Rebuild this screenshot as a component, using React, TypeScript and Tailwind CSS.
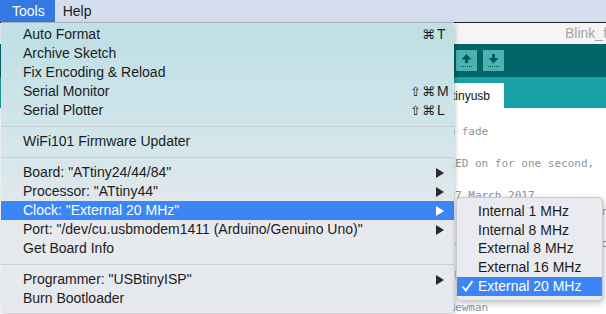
import React from "react";

type Item =
  | { kind: "sep" }
  | { kind: "item"; label: string; mods?: string; keyName?: string; sub?: boolean; active?: boolean };

const menuItems: Item[] = [
  { kind: "item", label: "Auto Format", mods: "⌘", keyName: "T" },
  { kind: "item", label: "Archive Sketch" },
  { kind: "item", label: "Fix Encoding & Reload" },
  { kind: "item", label: "Serial Monitor", mods: "⇧⌘", keyName: "M" },
  { kind: "item", label: "Serial Plotter", mods: "⇧⌘", keyName: "L" },
  { kind: "sep" },
  { kind: "item", label: "WiFi101 Firmware Updater" },
  { kind: "sep" },
  { kind: "item", label: 'Board: "ATtiny24/44/84"', sub: true },
  { kind: "item", label: 'Processor: "ATtiny44"', sub: true },
  { kind: "item", label: 'Clock: "External 20 MHz"', sub: true, active: true },
  { kind: "item", label: 'Port: "/dev/cu.usbmodem1411 (Arduino/Genuino Uno)"', sub: true },
  { kind: "item", label: "Get Board Info" },
  { kind: "sep" },
  { kind: "item", label: 'Programmer: "USBtinyISP"', sub: true },
  { kind: "item", label: "Burn Bootloader" },
];

const clockOptions = ["Internal 1 MHz", "Internal 8 MHz", "External 8 MHz", "External 16 MHz", "External 20 MHz"];

// editor lines sit mostly under the menu, only the tail end shows
const codeLines = [
  "/*",
  "  Blink and a fade",
  "",
  "  Turns the LED on for one second,",
  "",
  "  rewritten 27 March 2017",
  "  for the ATtiny44 on the hello board",
  "",
  "  This example code is in the public domain.",
  "",
  "  modified 8 May 2014",
  "",
  "  by Andrew Newman",
];

function Arrow({ white }: { white?: boolean }) {
  return (
    <svg width="14" height="10" viewBox="0 0 14 10" className="block">
      <polygon points="0,0 8,5 0,10" fill={white ? "#ffffff" : "#2a2a2a"} />
    </svg>
  );
}

function ToolButton({ dir }: { dir: "up" | "down" | "none" }) {
  return (
    <div className="w-[21px] h-[21px] bg-[#4cb3b1]">
      <svg width="21" height="21" viewBox="0 0 21 21" className="block">
        {dir === "up" && <polygon points="10.5,4 15.5,9.5 12,9.5 12,13 9,13 9,9.5 5.5,9.5" fill="#00585c" />}
        {dir === "down" && <polygon points="9,4 12,4 12,8 15.5,8 10.5,13.5 5.5,8 9,8" fill="#00585c" />}
        {dir !== "none" &&
          [5, 7, 9, 11, 13, 15].map((x) => <rect key={x} x={x} y={16} width={1} height={1} fill="#00585c" />)}
      </svg>
    </div>
  );
}

export default function App() {
  return (
    <div className="relative w-[606px] h-[314px] overflow-hidden bg-white font-['Liberation_Sans',Arial,sans-serif]">
      {/* menu bar */}
      <div className="flex h-[22px] items-center bg-[#d4deef] text-[14px] text-[#1a1a1a]">
        <div className="flex h-full items-center bg-[#3478e4] pl-3 pr-[10px] text-white">Tools</div>
        <div className="pl-[8px]">Help</div>
      </div>

      {/* Arduino window behind the menu */}
      <div className="flex flex-col h-[292px] border-t border-[#1e1e1e]">
        <div className="flex h-[21px] shrink-0 items-center bg-[#f5f5f5] pl-[565px] whitespace-nowrap text-[14px] text-[#a6a6a6]">
          Blink_fade_attinyusb | Arduino 1.8.2
        </div>
        <div className="flex h-[33px] shrink-0 items-center gap-[6px] bg-[#006468] pl-[375px]">
          <ToolButton dir="none" />
          <ToolButton dir="none" />
          <ToolButton dir="none" />
          <ToolButton dir="up" />
          <ToolButton dir="down" />
        </div>
        <div className="flex h-[31px] shrink-0 items-end bg-[#17a1a5] pl-[380px]">
          <div className="flex h-[25px] w-[124px] items-center justify-end bg-white pr-[14px] text-[12px] text-[#111]">
            Blink_attinyusb
          </div>
        </div>
        <div className="min-h-0 flex-1 overflow-hidden pl-[369px] font-['DejaVu_Sans_Mono',monospace] text-[11px] leading-[16px] text-[#8d9494]">
          {codeLines.map((line, i) => (
            <div key={i} className="h-4 whitespace-pre">
              {line}
            </div>
          ))}
        </div>
      </div>

      {/* Tools menu */}
      <div className="absolute left-px top-[22px] w-[453px] rounded-b-[5px] border-t border-[#a8b5be] bg-linear-to-b from-[#c0e0e6] from-5% via-[#d2e6ea] via-40% to-[#e6e9ee] to-70% pt-[2px] pb-[5px] text-[14px] text-[#1c1c1c] shadow-[1px_2px_5px_rgba(0,0,0,0.25)]">
        {menuItems.map((it, i) =>
          it.kind === "sep" ? (
            <div key={i} className="flex h-[12px] items-center">
              <div className="h-px w-full bg-[#c7d0d6]" />
            </div>
          ) : (
            <div
              key={i}
              className={`flex h-[19px] items-center pl-[22px] pr-[4px] ${
                it.active ? "bg-[#3c85f6] text-white" : ""
              }`}
            >
              <span className="flex-1 whitespace-nowrap">{it.label}</span>
              {it.sub && <Arrow white={it.active} />}
              {it.mods && (
                <span className="flex items-center">
                  <span className="flex gap-[1px] font-['DejaVu_Sans',sans-serif] text-[13px]">
                    {it.mods.split("").map((m, j) => (
                      <span key={j}>{m}</span>
                    ))}
                  </span>
                  <span className="ml-[2px] w-[13px]">{it.keyName}</span>
                </span>
              )}
            </div>
          )
        )}
      </div>

      {/* Clock submenu */}
      <div className="absolute left-[456px] top-[197px] w-[147px] rounded-[5px] border border-[#c9cacd] bg-[#e9ebf0] pt-[4px] pb-[4px] text-[14px] text-[#1c1c1c] shadow-[1px_2px_6px_rgba(0,0,0,0.25)]">
        {clockOptions.map((opt, i) => {
          const sel = i === clockOptions.length - 1;
          return (
            <div key={opt} className={`flex h-[18.75px] items-center ${sel ? "bg-[#3c85f6] text-white" : ""}`}>
              <span className="flex w-[21px] pl-[4px]">
                {sel && (
                  <svg width="13" height="12" viewBox="0 0 13 12" className="block">
                    <polyline points="1.5,6.5 4.8,10.5 11.5,1" fill="none" stroke="#ffffff" strokeWidth="1.8" />
                  </svg>
                )}
              </span>
              <span className="whitespace-nowrap">{opt}</span>
            </div>
          );
        })}
      </div>
    </div>
  );
}
